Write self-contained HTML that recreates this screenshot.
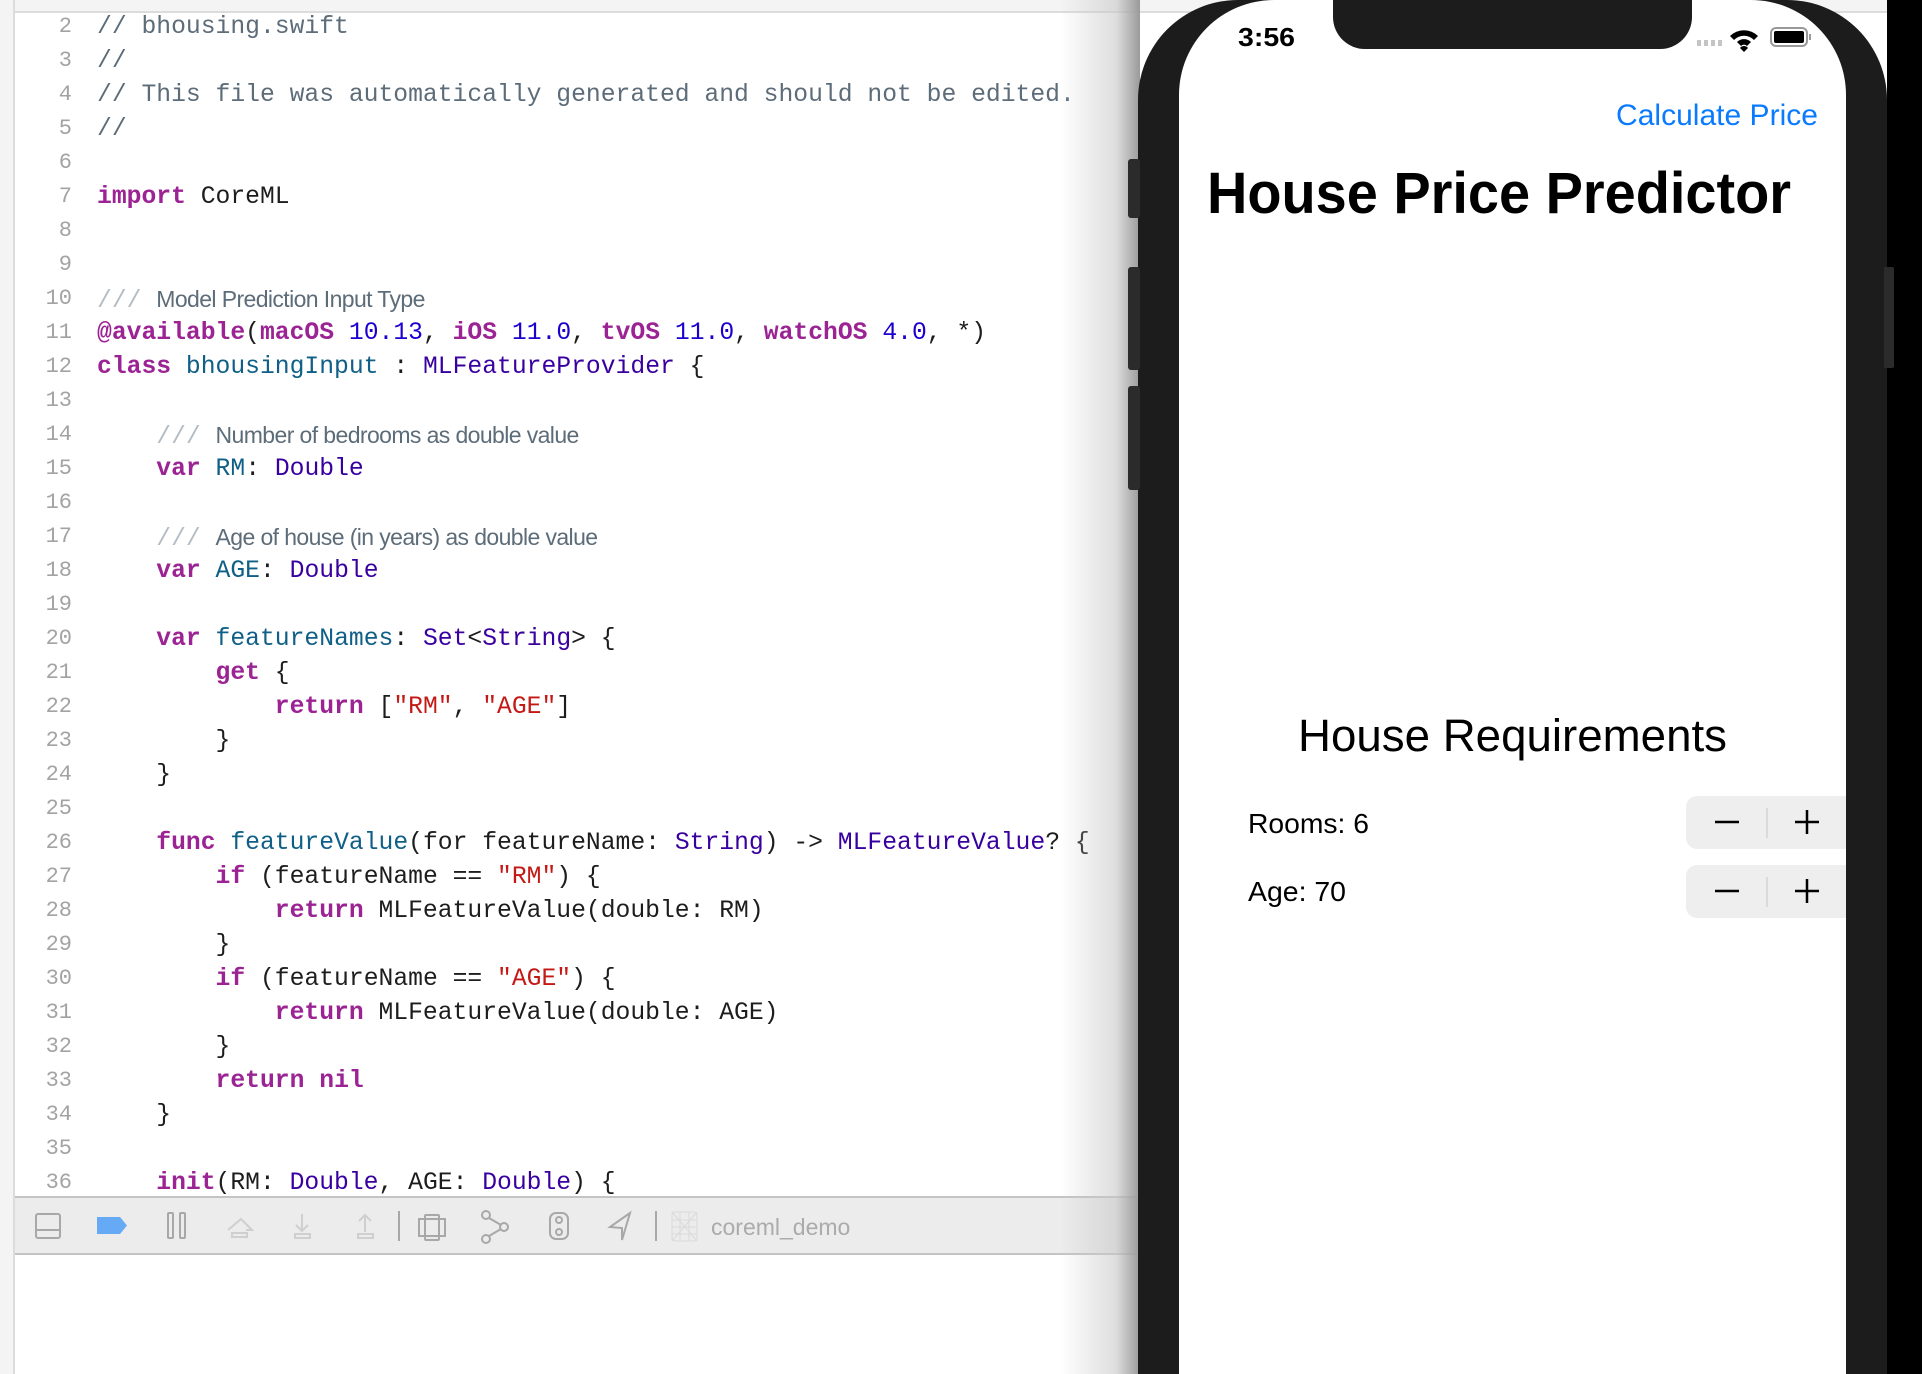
<!DOCTYPE html>
<html style="overflow:hidden;width:1922px;height:1374px"><head><meta charset="utf-8"><style>
*{margin:0;padding:0;box-sizing:border-box}
body{width:1922px;height:1374px;overflow:hidden;background:#fff;position:relative;font-family:"Liberation Sans",sans-serif}
#wrap{position:absolute;left:0;top:0;width:1922px;height:1374px;overflow:hidden}
.abs{position:absolute}
.ln{position:absolute;left:16px;width:56px;text-align:right;font-family:"Liberation Mono",monospace;font-size:22px;color:#a3a3a3;line-height:34px}
.cl{position:absolute;left:97px;font-family:"Liberation Mono",monospace;font-size:24.7px;line-height:34px;color:#1d1d1d;white-space:pre}
.k{color:#9b2393;font-weight:bold}.n{color:#1c00cf}.t{color:#3900a0}.p{color:#0f5f86}.s{color:#c41a16}.c{color:#5d6c79}.d{color:#b4bcc4}
.doc{font-family:"Liberation Sans",sans-serif;font-size:23px;color:#5d6c79;letter-spacing:-0.6px}
</style></head><body><div id="wrap">
<div class="abs" style="left:0;top:0;width:1922px;height:13px;background:#f4f4f4;border-bottom:2px solid #dcdcdc"></div>
<div class="abs" style="left:0;top:0;width:15px;height:1374px;background:#f4f4f4;border-right:2px solid #dcdcdc"></div>

<div id="code"></div>
<script>
var L={2:'<span class="c">// bhousing.swift</span>',3:'<span class="c">//</span>',4:'<span class="c">// This file was automatically generated and should not be edited.</span>',5:'<span class="c">//</span>',6:'',7:'<span class="k">import</span> CoreML',8:'',9:'',
10:'<span class="d">///</span> <span class="doc">Model Prediction Input Type</span>',
11:'<span class="k">@available</span>(<span class="k">macOS</span> <span class="n">10.13</span>, <span class="k">iOS</span> <span class="n">11.0</span>, <span class="k">tvOS</span> <span class="n">11.0</span>, <span class="k">watchOS</span> <span class="n">4.0</span>, *)',
12:'<span class="k">class</span> <span class="p">bhousingInput</span> : <span class="t">MLFeatureProvider</span> {',13:'',
14:'    <span class="d">///</span> <span class="doc">Number of bedrooms as double value</span>',
15:'    <span class="k">var</span> <span class="p">RM</span>: <span class="t">Double</span>',16:'',
17:'    <span class="d">///</span> <span class="doc">Age of house (in years) as double value</span>',
18:'    <span class="k">var</span> <span class="p">AGE</span>: <span class="t">Double</span>',19:'',
20:'    <span class="k">var</span> <span class="p">featureNames</span>: <span class="t">Set</span>&lt;<span class="t">String</span>&gt; {',
21:'        <span class="k">get</span> {',
22:'            <span class="k">return</span> [<span class="s">"RM"</span>, <span class="s">"AGE"</span>]',
23:'        }',24:'    }',25:'',
26:'    <span class="k">func</span> <span class="p">featureValue</span>(for featureName: <span class="t">String</span>) -&gt; <span class="t">MLFeatureValue</span>? {',
27:'        <span class="k">if</span> (featureName == <span class="s">"RM"</span>) {',
28:'            <span class="k">return</span> MLFeatureValue(double: RM)',
29:'        }',
30:'        <span class="k">if</span> (featureName == <span class="s">"AGE"</span>) {',
31:'            <span class="k">return</span> MLFeatureValue(double: AGE)',
32:'        }',
33:'        <span class="k">return</span> <span class="k">nil</span>',
34:'    }',35:'',
36:'    <span class="k">init</span>(RM: <span class="t">Double</span>, AGE: <span class="t">Double</span>) {'};
var h='';for(var i=2;i<=36;i++){var y=10+(i-2)*34;h+='<div class="ln" style="top:'+y+'px">'+i+'</div><div class="cl" style="top:'+y+'px">'+L[i]+'</div>';}
document.getElementById('code').innerHTML=h;
</script>

<div class="abs" style="left:15px;top:1196px;width:1130px;height:59px;background:#ececec;border-top:2px solid #c4c4c4;border-bottom:2px solid #c4c4c4"></div>
<svg class="abs" style="left:0;top:1190px" width="1140" height="70">
<g fill="none" stroke="#a8a8a8" stroke-width="2">
<rect x="36" y="24" width="24" height="24" rx="2"/><line x1="36" y1="40" x2="60" y2="40"/>
<rect x="168" y="23" width="5" height="25" rx="1"/><rect x="180" y="23" width="5" height="25" rx="1"/>
<g stroke="#cfcfcf"><path d="M228 40 L241 29 L252 40 M246 34 L252 40 L246 40"/><rect x="232" y="43" width="15" height="4"/>
<path d="M302 24 V40 M296 35 L302 41 L308 35"/><rect x="295" y="44" width="15" height="4"/>
<path d="M365 42 V26 M359 31 L365 25 L371 31"/><rect x="358" y="44" width="15" height="4"/></g>
<line x1="399" y1="21" x2="399" y2="51"/>
<rect x="425" y="25" width="14" height="25" rx="1"/><rect x="419" y="29" width="26" height="17"/>
<circle cx="486" cy="25" r="4"/><circle cx="486" cy="49" r="4"/><circle cx="504" cy="37" r="4"/><path d="M489 28 L501 35 M489 46 L501 39"/>
<rect x="550" y="23" width="18" height="26" rx="6"/><circle cx="559" cy="30" r="3"/><circle cx="559" cy="42" r="3"/>
<path d="M630 23 L610 37 L622 38 L622 50 Z"/>
<line x1="656" y1="21" x2="656" y2="51"/>
<g stroke="#dadada" stroke-width="1"><rect x="672" y="22" width="25" height="29" rx="3"/><path d="M672 30H697M672 37H697M672 44H697M680 22V51M689 22V51M672 22L697 51M697 22L672 51"/></g>
</g>
<path d="M97 27 H120 L127 35.5 L120 44 H97 Z" fill="#66aaf6"/>
<text x="711" y="45" font-family="Liberation Sans" font-size="23" fill="#ababab">coreml_demo</text>
</svg>

<div class="abs" style="left:1060px;top:0;width:80px;height:1374px;background:linear-gradient(to right,rgba(255,255,255,0),rgba(200,200,200,.6) 70%,#9a9a9a)"></div>
<div class="abs" style="left:1887px;top:0;width:35px;height:1374px;background:#000"></div>
<div class="abs" style="left:1138px;top:0;width:749px;height:1374px;background:#1c1c1c;border-radius:100px 100px 0 0"></div>
<div class="abs" style="left:1128px;top:159px;width:12px;height:59px;background:#2b2b2b;border-radius:3px"></div>
<div class="abs" style="left:1128px;top:267px;width:12px;height:103px;background:#2b2b2b;border-radius:3px"></div>
<div class="abs" style="left:1128px;top:386px;width:12px;height:104px;background:#2b2b2b;border-radius:3px"></div>
<div class="abs" style="left:1884px;top:267px;width:10px;height:101px;background:#2b2b2b;border-radius:2px"></div>
<div class="abs" style="left:1179px;top:0;width:667px;height:1374px;background:#fff;border-radius:95px 95px 0 0"></div>
<div class="abs" style="left:1333px;top:0;width:359px;height:49px;background:#1c1c1c;border-radius:0 0 32px 32px"></div>
<svg class="abs" style="left:1179px;top:0" width="667" height="1374">
<text x="59" y="46" font-family="Liberation Sans" font-weight="bold" font-size="26" fill="#000" textLength="57" lengthAdjust="spacingAndGlyphs">3:56</text>
<g fill="#c4c4c4"><rect x="518" y="40" width="4" height="6"/><rect x="525" y="40" width="4" height="6"/><rect x="532" y="40" width="4" height="6"/><rect x="539" y="40" width="4" height="6"/></g>
<path d="M551 36 A20 20 0 0 1 579 36 L575 40 A14 14 0 0 0 555 40 Z M558 42 A10 10 0 0 1 572 42 L568 46 A4 4 0 0 0 562 46 Z M565 52 L561 48 A5 5 0 0 1 569 48 Z" fill="#000"/>
<rect x="592" y="28" width="36" height="18" rx="5" fill="none" stroke="#999" stroke-width="2"/>
<rect x="595" y="31" width="30" height="12" rx="2" fill="#000"/><rect x="630" y="34" width="2" height="6" fill="#999"/>
<text x="437" y="125" font-family="Liberation Sans" font-size="30" fill="#0a7aff" textLength="202" lengthAdjust="spacingAndGlyphs">Calculate Price</text>
<text x="28" y="213" font-family="Liberation Sans" font-weight="bold" font-size="58" fill="#000" textLength="584" lengthAdjust="spacingAndGlyphs">House Price Predictor</text>
<text x="119" y="751" font-family="Liberation Sans" font-size="45" fill="#000" textLength="429" lengthAdjust="spacingAndGlyphs">House Requirements</text>
<text x="69" y="833" font-family="Liberation Sans" font-size="28" fill="#000" textLength="121" lengthAdjust="spacingAndGlyphs">Rooms: 6</text>
<text x="69" y="901" font-family="Liberation Sans" font-size="28" fill="#000" textLength="98" lengthAdjust="spacingAndGlyphs">Age: 70</text>
<rect x="507" y="796" width="170" height="53" rx="11" fill="#eeeeef"/>
<rect x="507" y="865" width="170" height="53" rx="11" fill="#eeeeef"/>
<g stroke="#d4d4d4" stroke-width="1.5"><line x1="588" y1="808" x2="588" y2="838"/><line x1="588" y1="877" x2="588" y2="907"/></g>
<g stroke="#000" stroke-width="2.5"><line x1="536" y1="822" x2="560" y2="822"/><line x1="616" y1="822" x2="640" y2="822"/><line x1="628" y1="810" x2="628" y2="834"/>
<line x1="536" y1="891" x2="560" y2="891"/><line x1="616" y1="891" x2="640" y2="891"/><line x1="628" y1="879" x2="628" y2="903"/></g>
</svg>
</div></body></html>
